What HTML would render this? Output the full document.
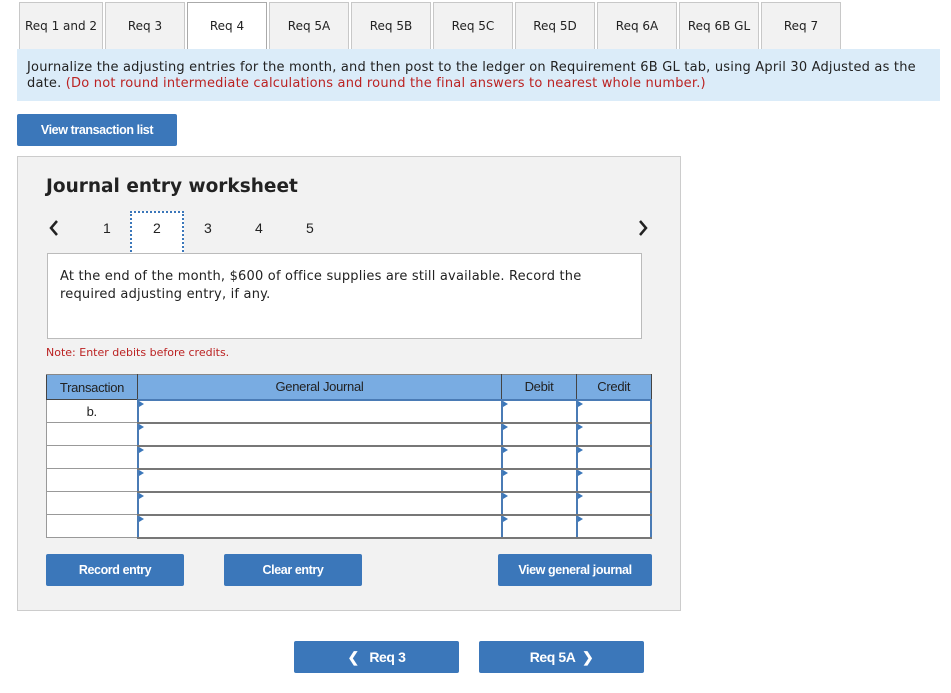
<!DOCTYPE html>
<html><head><meta charset="utf-8"><style>
*{box-sizing:border-box;margin:0;padding:0}
body{width:951px;height:693px;background:#fff;position:relative;font-family:"DejaVu Sans",Verdana,sans-serif;font-size:12.5px;color:#222;overflow:hidden}
.a{position:absolute}
.tab{position:absolute;top:2px;height:47px;width:80px;background:#f2f2f2;border:1px solid #c8c8c8;border-bottom:none;text-align:center;line-height:46px;font-size:12px;color:#222}
.tab.on{background:#fff;border-color:#aaa}
.btn{position:absolute;background:#3b77ba;color:#fff;font-family:"Liberation Sans",Arial,sans-serif;font-weight:bold;font-size:12.5px;text-align:center;border-radius:2px;letter-spacing:-0.4px}
.pg{position:absolute;top:220px;font-family:"Liberation Sans",Arial,sans-serif;font-size:14px;color:#222}
table{border-collapse:collapse;position:absolute;left:46px;top:374px;width:606px;font-family:"Liberation Sans",Arial,sans-serif;font-size:13px;letter-spacing:-0.3px}
th{background:#79ace2;height:25px;font-weight:normal;color:#222;border:1px solid #444;border-top:1px solid #888}
td{height:23px;border:1px solid #999;background:#fff;position:relative}
td.i{border:2px solid #4a7bb5;border-bottom-color:#777}
td.i:before{content:"";position:absolute;left:0;top:0;border-left:5px solid #3b77ba;border-top:3px solid transparent;border-bottom:3px solid transparent}
</style></head><body>
<div class="tab" style="left:19px;width:84px">Req 1 and 2</div>
<div class="tab" style="left:105px">Req 3</div>
<div class="tab on" style="left:187px">Req 4</div>
<div class="tab" style="left:269px">Req 5A</div>
<div class="tab" style="left:351px">Req 5B</div>
<div class="tab" style="left:433px">Req 5C</div>
<div class="tab" style="left:515px">Req 5D</div>
<div class="tab" style="left:597px">Req 6A</div>
<div class="tab" style="left:679px">Req 6B GL</div>
<div class="tab" style="left:761px">Req 7</div>
<div class="a" style="left:17px;top:49px;width:923px;height:52px;background:#dbecf9;padding:11px 10px;line-height:16px;font-size:13px;letter-spacing:0.2px">Journalize the adjusting entries for the month, and then post to the ledger on Requirement 6B GL tab, using April 30 Adjusted as the date. <span style="color:#b22">(Do not round intermediate calculations and round the final answers to nearest whole number.)</span></div>
<div class="btn" style="left:17px;top:114px;width:160px;height:32px;line-height:32px">View transaction list</div>
<div class="a" style="left:17px;top:156px;width:664px;height:455px;background:#f2f2f2;border:1px solid #ccc"></div>
<div class="a" style="left:46px;top:176px;font-size:18.5px;font-weight:bold;color:#222">Journal entry worksheet</div>
<div class="a" style="left:47px;top:217px;width:14px;height:22px"><svg width="14" height="22"><path d="M10 4 L4 11 L10 18" stroke="#222" stroke-width="2.5" fill="none"/></svg></div>
<div class="a" style="left:636px;top:217px;width:14px;height:22px"><svg width="14" height="22"><path d="M4 4 L10 11 L4 18" stroke="#222" stroke-width="2.5" fill="none"/></svg></div>
<div class="pg" style="left:103px">1</div>
<div class="a" style="left:130px;top:211px;width:54px;height:45px;background:#fff;border:2px dotted #3b77ba"></div>
<div class="pg" style="left:153px">2</div>
<div class="pg" style="left:204px">3</div>
<div class="pg" style="left:255px">4</div>
<div class="pg" style="left:306px">5</div>
<div class="a" style="left:47px;top:253px;width:595px;height:86px;background:#fff;border:1px solid #bbb;padding:14px 12px;line-height:18px;font-size:13px;letter-spacing:0.2px">At the end of the month, $600 of office supplies are still available. Record the required adjusting entry, if any.</div>
<div class="a" style="left:46px;top:346px;font-size:11px;color:#b22">Note: Enter debits before credits.</div>
<table>
<tr><th style="width:91px">Transaction</th><th style="width:364px">General Journal</th><th style="width:75px">Debit</th><th>Credit</th></tr>
<tr><td style="text-align:center">b.</td><td class="i"></td><td class="i"></td><td class="i"></td></tr>
<tr><td></td><td class="i"></td><td class="i"></td><td class="i"></td></tr>
<tr><td></td><td class="i"></td><td class="i"></td><td class="i"></td></tr>
<tr><td></td><td class="i"></td><td class="i"></td><td class="i"></td></tr>
<tr><td></td><td class="i"></td><td class="i"></td><td class="i"></td></tr>
<tr><td></td><td class="i"></td><td class="i"></td><td class="i"></td></tr>
</table>
<div class="btn" style="left:46px;top:554px;width:138px;height:32px;line-height:32px">Record entry</div>
<div class="btn" style="left:224px;top:554px;width:138px;height:32px;line-height:32px">Clear entry</div>
<div class="btn" style="left:498px;top:554px;width:154px;height:32px;line-height:32px">View general journal</div>
<div class="btn" style="left:294px;top:641px;width:165px;height:32px;line-height:32px;font-size:14px">&#10094;&nbsp;&nbsp; Req 3</div>
<div class="btn" style="left:479px;top:641px;width:165px;height:32px;line-height:32px;font-size:14px">Req 5A &nbsp;&#10095;</div>
</body></html>
